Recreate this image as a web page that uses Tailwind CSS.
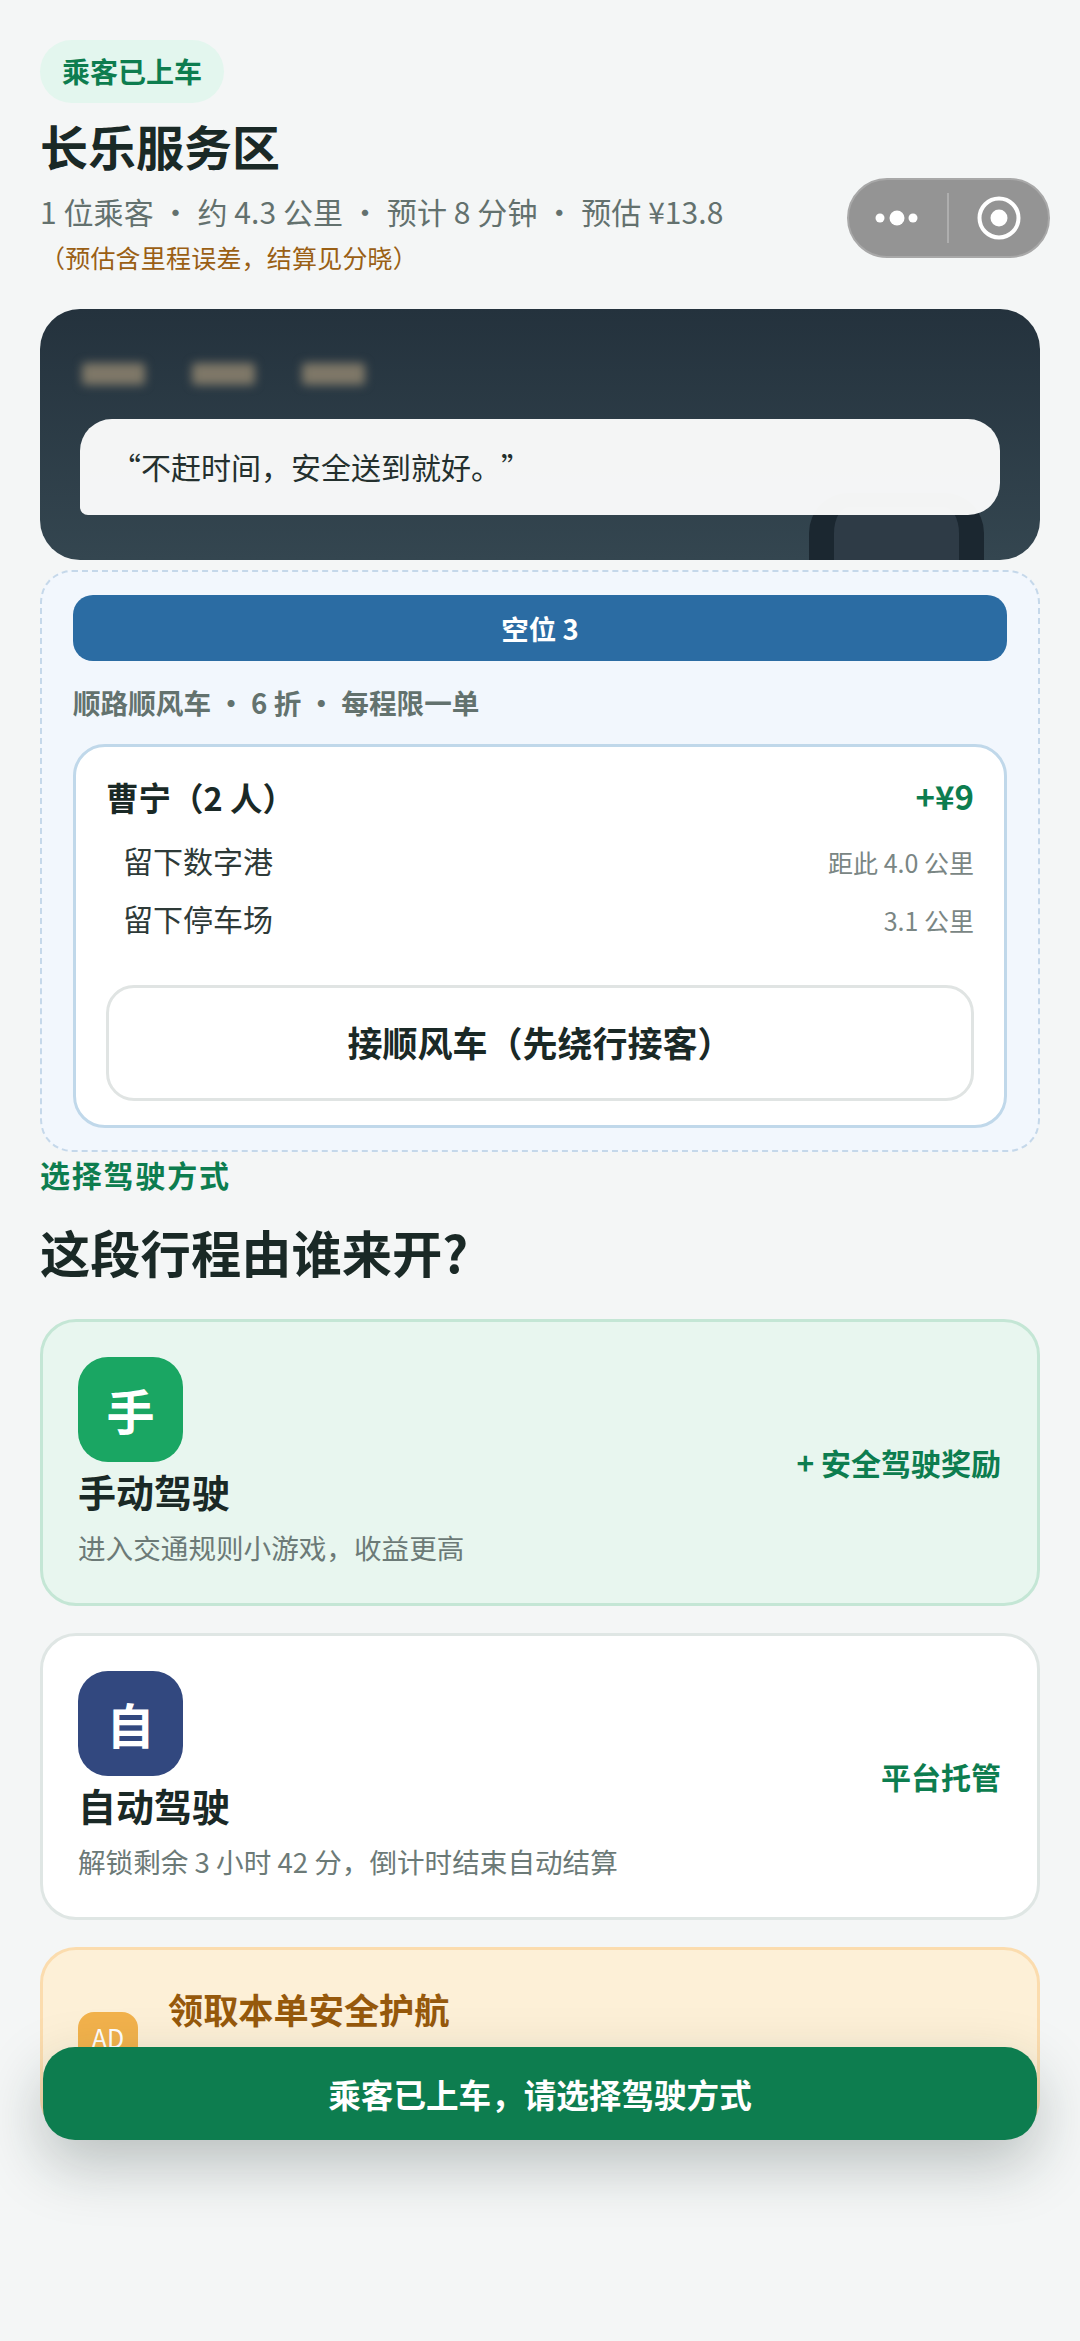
<!DOCTYPE html>
<html lang="zh-CN">
<head>
    <meta charset="UTF-8">
    <meta name="viewport" content="width=device-width, initial-scale=1.0">
    <title>长乐服务区</title>
    <script src="https://cdn.jsdelivr.net/npm/@tailwindcss/browser@4"></script>
</head>
<body class="relative w-[1080px] h-[2341px] overflow-hidden bg-[#f4f6f6] font-['Noto_Sans_CJK_SC',sans-serif] text-[#1a2926] [text-spacing-trim:space-all]">
    <!-- capsule menu -->
    <div class="absolute left-[847px] top-[178px] w-[203px] h-[80px] rounded-full bg-[#949494] border-2 border-[#a8a8a8] flex items-center">
        <svg width="203" height="80" viewBox="0 0 203 80" class="shrink-0 -m-[2px]">
            <circle cx="33" cy="40" r="4.5" fill="#fff"/>
            <circle cx="50" cy="40" r="7.5" fill="#fff"/>
            <circle cx="66" cy="40" r="4.5" fill="#fff"/>
            <rect x="100" y="15" width="2" height="50" fill="#aeaeae"/>
            <circle cx="152" cy="40" r="19.5" fill="none" stroke="#fff" stroke-width="4"/>
            <circle cx="152" cy="40" r="8.5" fill="#fff"/>
        </svg>
    </div>

    <main class="px-10 pt-10">
        <span class="inline-block h-[63px] leading-[63px] px-[22px] rounded-full bg-[#e3f6ee] text-[28px] font-bold text-[#0d7d4f] align-top">乘客已上车</span>
        <h1 class="mt-[12px] text-[48px] leading-[60px] font-bold">长乐服务区</h1>
        <p class="mt-[14px] text-[30px] leading-[44px] tracking-[0.08px] text-[#63716e]">1 位乘客 · 约 4.3 公里 · 预计 8 分钟 · 预估 ¥13.8</p>
        <p class="mt-[6px] text-[25px] leading-[36px] tracking-[0.2px] text-[#9a5f14]">（预估含里程误差，结算见分晓）</p>

        <!-- trip banner -->
        <section class="relative mt-[34px] h-[251px] rounded-[40px] overflow-hidden bg-gradient-to-b from-[#24323d] to-[#344650] px-10 pt-[54px]">
            <div class="absolute left-[769px] top-[184px] w-[175px] h-[100px] rounded-t-[40px] border-x-[25px] border-t-[14px] border-[#1b2730] bg-[#2e3b46]"></div>
            <div class="flex gap-[47px] ml-[2px]">
                <span class="w-[63px] h-[22px] rounded bg-[#7f7868] blur-[5px]"></span>
                <span class="w-[63px] h-[22px] rounded bg-[#7f7868] blur-[5px]"></span>
                <span class="w-[63px] h-[22px] rounded bg-[#7f7868] blur-[5px]"></span>
            </div>
            <div class="relative mt-[34px] h-[96px] rounded-t-[32px] rounded-br-[32px] rounded-bl-[8px] bg-white/95 pl-[31px] text-[30px] leading-[94px] text-[#24302e]">“不赶时间，安全送到就好。”</div>
        </section>

        <!-- carpool -->
        <section class="mt-[10px] h-[582px] rounded-[32px] border-2 border-dashed border-[#c5d8ea] bg-[#f2f7fd] px-[31px] pt-[23px]">
            <div class="h-[66px] rounded-[20px] bg-[#2b6ca3] text-center text-[27.5px] leading-[66px] font-bold text-white">空位 3</div>
            <p class="mt-[19px] text-[27.6px] leading-[44px] font-bold text-[#63726e]">顺路顺风车 · 6 折 · 每程限一单</p>
            <div class="mt-[20px] h-[384px] rounded-[32px] border-[3px] border-[#c0d8ea] bg-white px-[30px]">
                <div class="flex justify-between items-center h-[100px]">
                    <span class="text-[32.5px] font-bold">曹宁（2 人）</span>
                    <span class="text-[33px] font-bold text-[#0d7d4f]">+¥9</span>
                </div>
                <div class="flex justify-between items-baseline h-[58px] -mt-[16px] pt-[7px] pl-[17px]">
                    <span class="text-[30px] text-[#2e3a38]">留下数字港</span>
                    <span class="text-[25px] text-[#7a8684]">距此 4.0 公里</span>
                </div>
                <div class="flex justify-between items-baseline h-[58px] pt-[7px] pl-[17px]">
                    <span class="text-[30px] text-[#2e3a38]">留下停车场</span>
                    <span class="text-[25px] text-[#7a8684]">3.1 公里</span>
                </div>
                <div class="mt-[38px] h-[116px] rounded-[28px] border-[3px] border-[#e0e4e3] text-center text-[35px] leading-[108px] font-bold">接顺风车（先绕行接客）</div>
            </div>
        </section>

        <p class="mt-[3px] text-[30px] leading-[38px] font-bold tracking-[1.8px] text-[#0d7d4f]">选择驾驶方式</p>
        <h2 class="mt-[26px] text-[50.3px] leading-[64px] font-bold">这段行程由谁来开?</h2>

        <!-- drive mode -->
        <div class="mt-[36px] h-[287px] rounded-[36px] border-[3px] border-[#c4e6d5] bg-[#e8f6ef] pl-[35px] pr-[36px] flex justify-between items-center">
            <div>
                <div class="w-[105px] h-[105px] rounded-[30px] bg-[#1aa663] flex items-center justify-center text-[48px] font-bold text-white">手</div>
                <div class="mt-[3px] text-[38px] leading-[52px] font-bold">手动驾驶</div>
                <div class="mt-[8px] text-[27.6px] leading-[44px] text-[#6c7a77]">进入交通规则小游戏，收益更高</div>
            </div>
            <div class="text-[30px] font-bold text-[#0d7d4f]">+ 安全驾驶奖励</div>
        </div>
        <div class="mt-[27px] h-[287px] rounded-[36px] border-[3px] border-[#dfe6e4] bg-white pl-[35px] pr-[36px] flex justify-between items-center">
            <div>
                <div class="w-[105px] h-[105px] rounded-[30px] bg-[#32487f] flex items-center justify-center text-[48px] font-bold text-white">自</div>
                <div class="mt-[3px] text-[38px] leading-[52px] font-bold">自动驾驶</div>
                <div class="mt-[8px] text-[27.6px] leading-[44px] text-[#6c7a77]">解锁剩余 3 小时 42 分，倒计时结束自动结算</div>
            </div>
            <div class="text-[30px] font-bold text-[#0d7d4f]">平台托管</div>
        </div>

        <!-- ad card, bottom part sits under the action bar -->
        <div class="mt-[27px] h-[188px] rounded-[36px] border-[3px] border-[#fbdcae] bg-[#fdf0d7] pl-[35px] pt-[34px] flex items-start gap-[30px]">
            <div class="mt-[28px] w-[60px] h-[58px] rounded-[16px] bg-[#f2b24c] text-center text-[25px] leading-[50px] text-white">AD</div>
            <div class="text-[35.2px] leading-[50px] font-bold text-[#96590c]">领取本单安全护航</div>
        </div>
    </main>

    <!-- action bar -->
    <div class="absolute left-[43px] top-[2047px] w-[994px] h-[93px] rounded-[32px] bg-[#0d7d4f] shadow-[0_24px_60px_rgba(20,40,35,0.26)] text-center text-[32.6px] leading-[93px] font-bold text-white">乘客已上车，请选择驾驶方式</div>
</body>
</html>
